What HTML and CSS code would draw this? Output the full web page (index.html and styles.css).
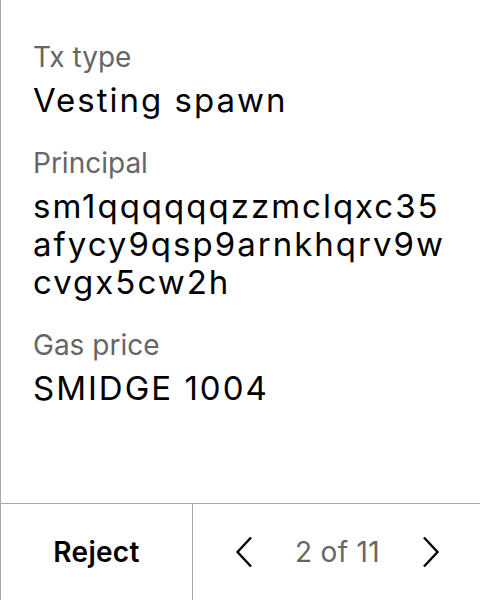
FILE: index.html
```html
<!DOCTYPE html>
<html>
<head>
<meta charset="utf-8">
<link rel="stylesheet" href="styles.css">
</head>
<body>
<div class="screen">
  <div class="content">
    <div class="field">
      <div class="label">Tx type</div>
      <div class="value">Vesting spawn</div>
    </div>
    <div class="field">
      <div class="label">Principal</div>
      <div class="value addr">sm1qqqqqqzzmclqxc35 afycy9qsp9arnkhqrv9w cvgx5cw2h</div>
    </div>
    <div class="field">
      <div class="label">Gas price</div>
      <div class="value">SMIDGE 1004</div>
    </div>
  </div>
  <div class="footer">
    <div class="reject">Reject</div>
    <div class="pager">
      <svg class="chev" width="18" height="32" viewBox="0 0 18 32"><path d="M16 1.5 L2.5 16 L16 30.5" fill="none" stroke="#000" stroke-width="2.4"/></svg>
      <span class="count">2 of 11</span>
      <svg class="chev" width="18" height="32" viewBox="0 0 18 32"><path d="M2 1.5 L15.5 16 L2 30.5" fill="none" stroke="#000" stroke-width="2.4"/></svg>
    </div>
  </div>
</div>
</body>
</html>
```
FILE: styles.css
```css
html, body { margin: 0; padding: 0; background: #fff; }
body { font-family: Inter, "Noto Sans", sans-serif; }
.screen {
  width: 480px; height: 600px; box-sizing: border-box;
  border-left: 1px solid #a8a8a8;
  display: flex; flex-direction: column;
}
.content { flex: 1; padding: 40px 30px 0 32px; }
.field { margin-bottom: 27px; }
.label { font-size: 28px; line-height: 34px; color: #666; }
.value { font-size: 33px; line-height: 38px; letter-spacing: 2px; color: #000; margin-top: 7px; }
.addr { width: 430px; }
.footer {
  height: 96px; border-top: 1px solid #a8a8a8;
  display: flex;
}
.reject {
  width: 191px; border-right: 1px solid #a8a8a8;
  display: flex; align-items: center; justify-content: center;
  font-size: 28px; font-weight: 600; letter-spacing: 0.3px; color: #000;
}
.pager {
  flex: 1; display: flex; align-items: center; justify-content: center; gap: 42px;
  padding-left: 2px;
}
.count { font-size: 28px; letter-spacing: 0.3px; color: #666; }
.chev { display: block; }
```
